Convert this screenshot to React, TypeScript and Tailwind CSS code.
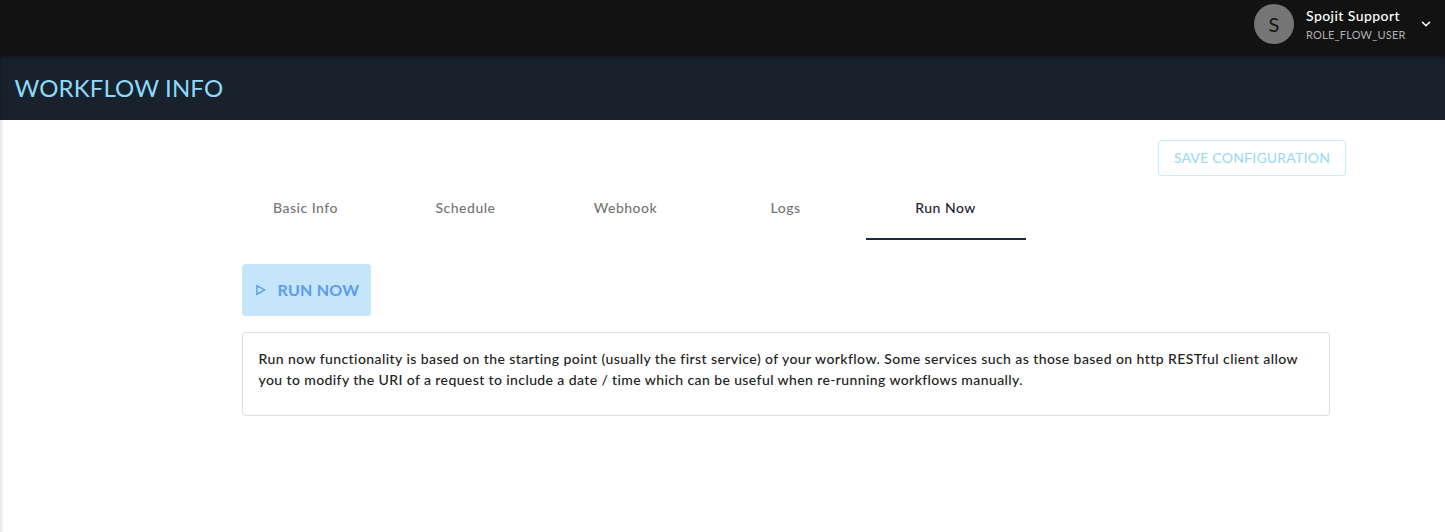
import { ChevronDown } from "lucide-react";

const tabs = [
  { label: "Basic Info" },
  { label: "Schedule" },
  { label: "Webhook" },
  { label: "Logs" },
  { label: "Run Now", active: true },
];

function TopBar() {
  return (
    <header className="flex h-14 items-start justify-end bg-[#121212] pt-1">
      <div className="flex h-10 w-10 items-center justify-center rounded-full bg-[#757575] text-xl text-[#121212]">
        S
      </div>
      <div className="ml-3 w-[113px] whitespace-nowrap">
        <div className="h-6 text-sm leading-6 font-medium tracking-[0.43px] text-white">Spojit Support</div>
        <div className="text-[11px] leading-[14px] tracking-[0.22px] text-[#b0b0b0]">ROLE_FLOW_USER</div>
      </div>
      <ChevronDown className="mt-[13px] mr-3 h-3.5 w-3.5 text-white" strokeWidth={2.6} />
    </header>
  );
}

function Tabs() {
  return (
    <nav className="ml-[210px] flex h-16">
      {tabs.map((tab) => (
        <button
          key={tab.label}
          className={
            tab.active
              ? "w-40 border-b-2 border-[#1f2b3a] pt-0.5 pr-px text-sm font-medium tracking-[0.5px] text-[#1f2330]"
              : "w-40 border-b-2 border-transparent pt-0.5 pr-px text-sm font-medium tracking-[0.5px] text-[#757575]"
          }
        >
          {tab.label}
        </button>
      ))}
    </nav>
  );
}

export default function App() {
  return (
    <div className="relative h-[532px] w-[1445px] overflow-hidden bg-white font-['Lato',sans-serif]">
      <TopBar />
      <div className="flex h-16 items-center bg-[#18222d] pl-[14.5px] shadow-[inset_0_4px_4px_-2px_#11151b]">
        <h1 className="text-2xl tracking-[0.12px] text-[#90d8fa]">WORKFLOW INFO</h1>
      </div>
      <main className="px-4 pt-5">
        <div className="flex justify-end pr-[83px]">
          <button className="h-9 w-[188px] rounded border border-[#c4eafb] text-sm tracking-[0.23px] text-[#96d9f8]">
            SAVE CONFIGURATION
          </button>
        </div>
        <Tabs />
        <section className="mt-6 ml-[226px] w-[1088px]">
          <button className="flex h-[52px] w-[129px] items-center rounded bg-[#c5e5fa] pl-[13px] text-base font-bold text-[#5e9bed]">
            <svg className="h-3 w-3" viewBox="0 0 12 12" fill="none" stroke="currentColor" strokeWidth="1.4">
              <path d="M1.9 1.8v8.4L9.6 6z" />
            </svg>
            <span className="ml-[10.5px] tracking-[0.25px] whitespace-nowrap">RUN NOW</span>
          </button>
          <div className="mt-4 h-[84px] rounded border border-[#dedede] px-[15.5px] pt-[15px] text-sm leading-[21px] font-medium whitespace-nowrap text-[#212121]">
            <p>
              <span className="tracking-[0.425px]">Run now functionality is based on the starting point (usually the first service) of your workflow. Some services such as those based on http RESTful client allow</span>
              <br />
              <span className="tracking-[0.395px]">you to modify the URI of a request to include a date / time which can be useful when re-running workflows manually.</span>
            </p>
          </div>
        </section>
      </main>
      <div className="pointer-events-none absolute inset-y-0 left-0 w-1 bg-linear-to-r from-black/10 to-transparent" />
    </div>
  );
}
